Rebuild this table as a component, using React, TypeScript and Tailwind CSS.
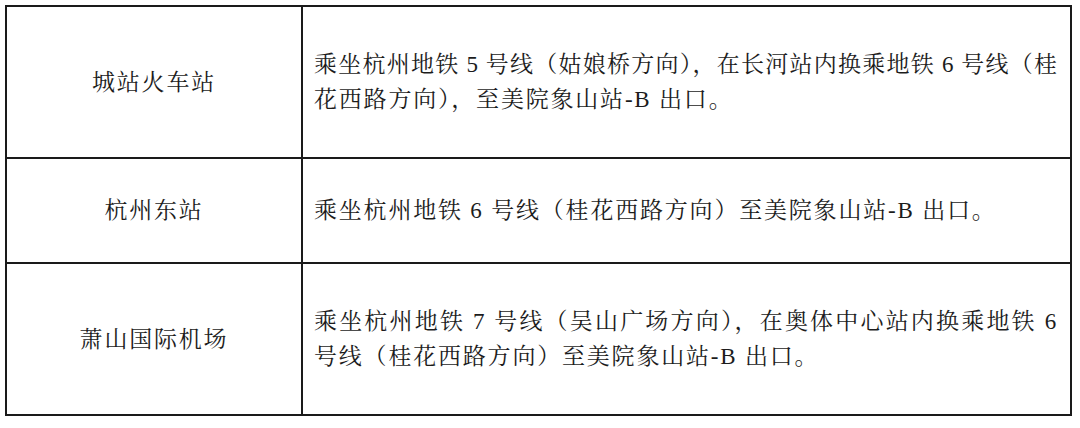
import React from "react";

const rows = [
  {
    name: "城站火车站",
    lines: [
      "乘坐杭州地铁 5 号线（姑娘桥方向），在长河站内换乘地铁 6 号线（桂",
      "花西路方向），至美院象山站-B 出口。",
    ],
    h: "h-[152px] border-b-2",
    tight: true,
  },
  {
    name: "杭州东站",
    lines: ["乘坐杭州地铁 6 号线（桂花西路方向）至美院象山站-B 出口。"],
    h: "h-[105px] border-b-2",
    tight: false,
  },
  {
    name: "萧山国际机场",
    lines: [
      "乘坐杭州地铁 7 号线（吴山广场方向），在奥体中心站内换乘地铁 6",
      "号线（桂花西路方向）至美院象山站-B 出口。",
    ],
    h: "h-[150px]",
    tight: false,
  },
];

const App = () => {
  return (
    <div className="min-h-screen bg-white pt-[5px] pl-[5px] font-['Liberation_Serif','Noto_Serif_CJK_SC','Noto_Sans_CJK_SC',serif] text-[#1c1c1c]">
      <div className="w-[1067px] border-2 border-[#1a1a1a] grid grid-cols-[296px_1fr]">
        {rows.map((row) => (
          <React.Fragment key={row.name}>
            <div className={`${row.h} border-r-2 border-[#1a1a1a] flex items-center justify-center text-[23px] tracking-[1.8px] leading-[35px]`}>
              {row.name}
            </div>
            <div className={`${row.h} border-[#1a1a1a] flex flex-col justify-center pl-[11px] pr-[12px] text-[23px] leading-[35px]`}>
              {row.lines.map((line, i) => {
                const first = i < row.lines.length - 1;
                return (
                  <div
                    key={i}
                    className={
                      first
                        ? row.tight
                          ? "whitespace-nowrap tracking-[0.9px] text-justify [text-align-last:justify]"
                          : "whitespace-nowrap tracking-[1.8px] text-justify [text-align-last:justify]"
                        : "tracking-[1.8px]"
                    }
                  >
                    {line}
                  </div>
                );
              })}
            </div>
          </React.Fragment>
        ))}
      </div>
    </div>
  );
};

export default App;
